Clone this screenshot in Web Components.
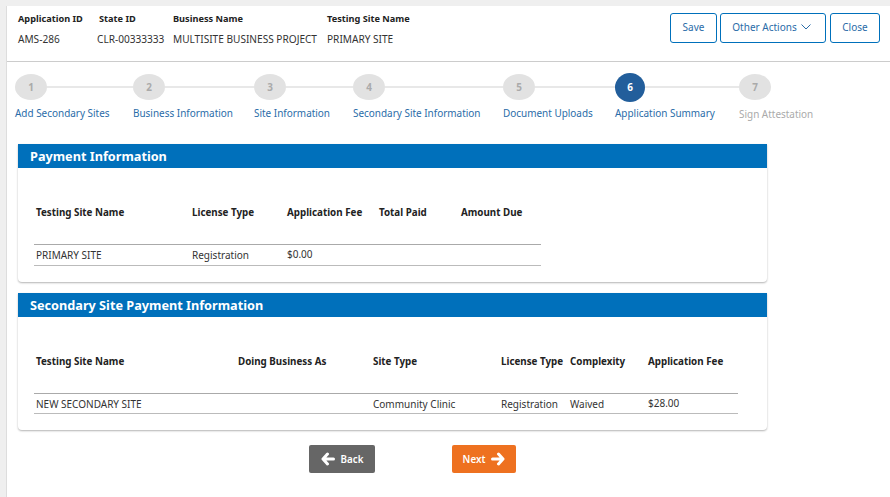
<!DOCTYPE html>
<html lang="en">
<head>
<meta charset="UTF-8">
<title>Application Summary</title>
<style>
  html, body { margin: 0; background: #fff; }
  body { font-family: "Noto Sans", "Open Sans", sans-serif; color: #333; height: 497px; overflow: hidden; }
</style>
</head>
<body>
<app-shell>
  <app-header slot="header">
    <info-col label="Application ID" style="width:81px">AMS-286</info-col>
    <info-col label="State ID" style="width:74px" shift>CLR-00333333</info-col>
    <info-col label="Business Name" style="width:154px">MULTISITE BUSINESS PROJECT</info-col>
    <info-col label="Testing Site Name">PRIMARY SITE</info-col>
    <outline-button slot="actions" style="width:47px">Save</outline-button>
    <outline-button slot="actions" style="width:106px;margin-left:-1px" caret>Other Actions</outline-button>
    <outline-button slot="actions" style="width:50px">Close</outline-button>
  </app-header>

  <wizard-steps slot="steps">
    <wizard-step num="1" style="width:118px">Add Secondary Sites</wizard-step>
    <wizard-step num="2" style="width:121px">Business Information</wizard-step>
    <wizard-step num="3" style="width:99px">Site Information</wizard-step>
    <wizard-step num="4" style="width:150px">Secondary Site Information</wizard-step>
    <wizard-step num="5" style="width:112px">Document Uploads</wizard-step>
    <wizard-step num="6" style="width:124px" active>Application Summary</wizard-step>
    <wizard-step num="7" style="width:74px" disabled last>Sign Attestation</wizard-step>
  </wizard-steps>

  <panel-card heading="Payment Information" h="114">
    <data-table cols="156px 95px 92px 82px 82px" width="507" rowh="21"
      head="Testing Site Name|License Type|Application Fee|Total Paid|Amount Due"
      row="PRIMARY SITE|Registration|$0.00||"></data-table>
  </panel-card>

  <panel-card heading="Secondary Site Payment Information" h="113">
    <data-table cols="202px 135px 128px 69px 78px 92px" width="704" rowh="20"
      head="Testing Site Name|Doing Business As|Site Type|License Type|Complexity|Application Fee"
      row="NEW SECONDARY SITE||Community Clinic|Registration|Waived|$28.00"></data-table>
  </panel-card>

  <div slot="nav" style="display:flex;gap:77px;padding-left:309px">
    <nav-button kind="back">Back</nav-button>
    <nav-button kind="next">Next</nav-button>
  </div>
</app-shell>

<template id="shell-tpl">
  <style>
    :host { display: block; height: 497px; background: #efefef; padding-top: 6px; box-sizing: border-box; }
    .page { margin-left: 7px; background: #fff; height: 491px; display: flex; flex-direction: column; box-shadow: -1px 0 0 #ddd; }
    .panels { margin: 15px 0 0 11px; width: 749px; display: flex; flex-direction: column; gap: 11px; }
    .nav { margin-top: 15px; margin-left: -7px; }
  </style>
  <div class="page">
    <slot name="header"></slot>
    <slot name="steps"></slot>
    <div class="panels"><slot></slot></div>
    <div class="nav"><slot name="nav"></slot></div>
  </div>
</template>

<script>
  function fromTemplate(el, id) {
    el.attachShadow({ mode: 'open' }).append(document.getElementById(id).content.cloneNode(true));
  }

  class AppShell extends HTMLElement {
    connectedCallback() { fromTemplate(this, 'shell-tpl'); }
  }

  class AppHeader extends HTMLElement {
    connectedCallback() {
      this.attachShadow({ mode: 'open' }).innerHTML = `
        <style>
          :host { display: flex; height: 56px; box-sizing: border-box; border-bottom: 1px solid #ccc; padding: 7px 10px 0 11px; justify-content: space-between; }
          .info { display: flex; margin-top: -1px; }
          .actions { display: flex; gap: 4px; align-items: flex-start; }
        </style>
        <div class="info"><slot></slot></div>
        <div class="actions"><slot name="actions"></slot></div>`;
    }
  }

  class InfoCol extends HTMLElement {
    connectedCallback() {
      this.attachShadow({ mode: 'open' }).innerHTML = `
        <style>
          :host { display: block; font-size: 10.1px; white-space: nowrap; }
          b { display: block; font-size: 9.2px; font-weight: 700; color: #222; line-height: 14px; }
          span { display: block; margin-top: 6px; line-height: 14px; color: #333; }
          :host([shift]) span { margin-left: -2px; }
        </style>
        <b>${this.getAttribute('label')}</b><span><slot></slot></span>`;
    }
  }

  class OutlineButton extends HTMLElement {
    connectedCallback() {
      const caret = this.hasAttribute('caret')
        ? '<svg width="10" height="6" viewBox="0 0 10 6"><path d="M.5.5 5 5 9.5.5" fill="none" stroke="#2a6ca8" stroke-width="1"/></svg>' : '';
      this.attachShadow({ mode: 'open' }).innerHTML = `
        <style>
          :host { display: flex; height: 30px; box-sizing: border-box; border: 1px solid #0070bb; border-radius: 3px; padding-bottom: 2px; align-items: center; justify-content: center; gap: 4px; font-size: 10px; color: #2a6ca8; }
          :host([caret]) { padding-right: 3px; }
        </style>
        <slot></slot>${caret}`;
    }
  }

  class WizardSteps extends HTMLElement {
    connectedCallback() {
      this.attachShadow({ mode: 'open' }).innerHTML = `
        <style>:host { display: flex; padding: 10px 0 0 8px; height: 57px; }</style>
        <slot></slot>`;
    }
  }

  class WizardStep extends HTMLElement {
    connectedCallback() {
      const last = this.hasAttribute('last');
      this.attachShadow({ mode: 'open' }).innerHTML = `
        <style>
          :host { display: block; font-size: 9.95px; white-space: nowrap; color: #2a6ca8; }
          :host([disabled]) { color: #aaa; }
          .top { display: flex; align-items: center; height: 30px; }
          .dot { width: 32px; height: 26px; border-radius: 50%; background: #e2e2e2; color: #aaa; font-weight: 700; display: flex; align-items: center; justify-content: center; flex: none; }
          :host([active]) .dot { width: 30px; height: 29px; background: #225e9b; color: #fff; }
          .line { flex: 1; height: 2px; background: #e8e8e8; }
          .label { margin-top: 4px; line-height: 14px; }
          :host([disabled]) .label { margin-top: 5px; }
        </style>
        <div class="top"><div class="dot">${this.getAttribute('num')}</div>${last ? '' : '<div class="line"></div>'}</div>
        <div class="label"><slot></slot></div>`;
    }
  }

  class PanelCard extends HTMLElement {
    connectedCallback() {
      this.attachShadow({ mode: 'open' }).innerHTML = `
        <style>
          :host { display: block; background: #fff; border-radius: 0 0 4px 4px; box-shadow: 0 1px 2px rgba(0,0,0,.3); height: ${24 + Number(this.getAttribute('h'))}px; }
          h2 { margin: 0; height: 24px; background: #0070bb; color: #fff; font-size: 12.7px; font-weight: 700; line-height: 25px; padding-left: 12px; }
          .body { padding: 0 16px; }
        </style>
        <h2>${this.getAttribute('heading')}</h2>
        <div class="body"><slot></slot></div>`;
    }
  }

  class DataTable extends HTMLElement {
    connectedCallback() {
      const cols = this.getAttribute('cols');
      const cells = (s, cls) => s.split('|').map(t => `<div class="${cls}${t[0] === '$' ? ' money' : ''}">${t}</div>`).join('');
      this.attachShadow({ mode: 'open' }).innerHTML = `
        <style>
          :host { display: block; width: ${this.getAttribute('width')}px; font-size: 10px; white-space: nowrap; }
          .r { display: grid; grid-template-columns: ${cols}; }
          .head { height: 63px; padding-top: 13px; align-items: center; border-bottom: 1px solid #aaa; }
          .th { font-size: 9.8px; font-weight: 700; color: #222; padding-left: 2px; }
          .row { height: ${this.getAttribute('rowh')}px; align-items: center; border-bottom: 1px solid #bbb; box-sizing: border-box; }
          .td { color: #333; padding-left: 2px; }
          .money { padding-bottom: 2px; }
        </style>
        <div class="r head">${cells(this.getAttribute('head'), 'th')}</div>
        <div class="r row">${cells(this.getAttribute('row'), 'td')}</div>`;
    }
  }

  class NavButton extends HTMLElement {
    connectedCallback() {
      const back = this.getAttribute('kind') === 'back';
      const arrow = `<svg width="14" height="14" viewBox="0 0 14 14"><path fill="none" stroke="#fff" stroke-width="3" stroke-linejoin="round" stroke-linecap="round" d="${back
        ? 'M6.5 2 2 7l4.5 5M3 7h9.5'
        : 'M7.5 2 12 7l-4.5 5M11 7H1.5'}"/></svg>`;
      this.attachShadow({ mode: 'open' }).innerHTML = `
        <style>
          :host { display: flex; height: 28px; border-radius: 2px; align-items: center; justify-content: center; gap: 6px; color: #fff; font-size: 9.8px; font-weight: 600; }
          :host([kind=back]) { width: 66px; background: #666; }
          :host([kind=next]) { width: 64px; background: #ee7120; }
        </style>
        ${back ? arrow + '<slot></slot>' : '<slot></slot>' + arrow}`;
    }
  }

  customElements.define('app-shell', AppShell);
  customElements.define('app-header', AppHeader);
  customElements.define('info-col', InfoCol);
  customElements.define('outline-button', OutlineButton);
  customElements.define('wizard-steps', WizardSteps);
  customElements.define('wizard-step', WizardStep);
  customElements.define('panel-card', PanelCard);
  customElements.define('data-table', DataTable);
  customElements.define('nav-button', NavButton);
</script>
</body>
</html>
